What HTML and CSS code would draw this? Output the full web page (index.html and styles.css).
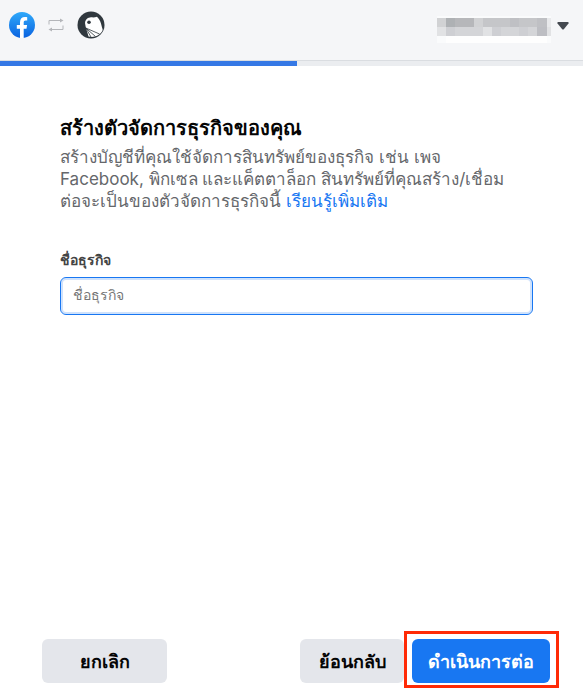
FILE: index.html
```html
<!DOCTYPE html>
<html lang="th">
  <head>
    <meta charset="UTF-8">
    <meta name="viewport" content="width=device-width, initial-scale=1">
    <title>สร้างตัวจัดการธุรกิจของคุณ</title>
    <link rel="stylesheet" href="styles.css">
  </head>
  <body>
    <header class="topbar">
      <div class="logos">
        <svg width="26" height="26" viewBox="0 0 26 26" aria-hidden="true">
          <defs>
            <linearGradient id="fb" x1="0" y1="0" x2="0" y2="1">
              <stop offset="0" stop-color="#2fa9fa"/>
              <stop offset="1" stop-color="#0b63e0"/>
            </linearGradient>
          </defs>
          <circle cx="13" cy="13" r="13" fill="url(#fb)"/>
          <path d="M11 26V16.800H7.800V13H11v-2.800C11 6.900 12.900 5.100 15.900 5.100c1.100 0 2.300.2 2.300.2v3.200h-1.500c-1.500 0-2 .9-2 1.900V13h3.400l-.6 3.800h-2.800V26z" fill="#fff"/>
        </svg>
        <svg width="16" height="14" viewBox="0 0 16 14" fill="none" stroke="#b4b6ba" aria-hidden="true">
          <path d="M1 6.500V2.500H14"/>
          <path d="M15 7.500V11.500H2"/>
          <path d="M12 0.500L15.500 2.500L12 4.500zM4 9.500L0.500 11.500L4 13.500z" fill="#b4b6ba" stroke="none"/>
        </svg>
        <svg width="28" height="28" viewBox="0 0 28 28" aria-hidden="true">
          <circle cx="14" cy="14" r="13.500" fill="#30383e"/>
          <path d="M8 12C8.500 8 11 6.500 14 6.300C16 6.500 18 6.500 20 5.800C23 9 24 12 24.500 14.500C25 17 26 18 25.500 19.500C23 24.500 17 27 11.500 25.500C10.500 21 8.500 17 8 12z" fill="#fff"/>
          <circle cx="12" cy="11.300" r="1.800" fill="#30383e"/>
          <path d="M8.800 17L18.500 25.500M8.800 17L14 26M8.800 17L22.500 23" stroke="#30383e" stroke-width="0.800"/>
        </svg>
      </div>
      <button class="account" type="button" aria-label="บัญชี">
        <!-- account name, pixelated -->
        <svg width="114" height="27" viewBox="0 0 114 27" shape-rendering="crispEdges" aria-hidden="true">
          <path fill="#fafbfc" d="M0 0h114v27H0z"/>
          <path fill="#c5c6c9" d="M0 2h110v9H0z"/>
          <path fill="#d1d2d4" d="M0 2h9v9H0zM37 2h9v9h-9z"/>
          <path fill="#aeb1b4" d="M9 2h9v9H9z"/>
          <path fill="#b6b7ba" d="M18 2h19v9H18z"/>
          <path fill="#bfc0c4" d="M73 2h9v9h-9zM100 2h10v9h-10z"/>
          <path fill="#d4d5d8" d="M0 11h110v9H0z"/>
          <path fill="#e1e2e4" d="M0 11h9v9H0zM46 11h9v9h-9zM110 11h4v9h-4z"/>
          <path fill="#cecfd3" d="M9 11h9v9H9zM55 11h9v9h-9zM82 11h9v9h-9z"/>
          <path fill="#bdbec3" d="M100 11h10v9h-10z"/>
          <path fill="#e8e9eb" d="M110 2h4v9h-4z"/>
          <path fill="#fefefe" d="M9 20h101v7H9z"/>
        </svg>
        <svg width="12" height="8" viewBox="0 0 12 8" aria-hidden="true">
          <path d="M1 0H11Q12 0 11.500 1.500L7 7Q6 8 5 7L0.500 1.500Q0 0 1 0z" fill="#444950"/>
        </svg>
      </button>
    </header>
    <div class="progress"><div class="progress-bar"></div></div>

    <main class="content">
      <h1>สร้างตัวจัดการธุรกิจของคุณ</h1>
      <p class="intro">สร้างบัญชีที่คุณใช้จัดการสินทรัพย์ของธุรกิจ เช่น เพจ<br>
        Facebook, พิกเซล และแค็ตตาล็อก สินทรัพย์ที่คุณสร้าง/เชื่อม<br>
        ต่อจะเป็นของตัวจัดการธุรกิจนี้ <a href="#">เรียนรู้เพิ่มเติม</a></p>
      <label class="field-label" for="business-name">ชื่อธุรกิจ</label>
      <input class="field" id="business-name" type="text" placeholder="ชื่อธุรกิจ">
    </main>

    <footer class="actions">
      <button class="btn btn-cancel" type="button">ยกเลิก</button>
      <button class="btn" type="button">ย้อนกลับ</button>
      <button class="btn btn-primary" type="button">ดำเนินการต่อ</button>
    </footer>
  </body>
</html>
```
FILE: styles.css
```css
* { box-sizing: border-box; }
body { margin: 0; min-height: 100vh; display: flex; flex-direction: column; background: #fff; color: #050505; font-family: Inter, "Noto Sans", sans-serif; }

.topbar { display: flex; justify-content: space-between; align-items: flex-start; height: 61px; padding: 11px 14px 0 9px; background: #f5f6f8; border-bottom: 1px solid #dadde1; }
.logos { display: flex; align-items: center; gap: 13px; }
.account { display: flex; align-items: center; gap: 6px; margin-top: 5px; padding: 0; border: 0; background: none; }
.account svg:last-child { margin-bottom: 8px; }
.progress { height: 5px; background: #ebedf0; }
.progress-bar { width: 51%; height: 5px; background: #3578e5; }

.content { flex: 1; padding: 48px 50px 0 60px; }
h1 { margin: 0 0 4px; font-size: 20px; line-height: 28px; font-weight: 700; }
.intro { margin: 0 0 38px; font-size: 17px; line-height: 22px; color: #65676b; }
.intro a { color: #1877f2; text-decoration: none; }
.field-label { display: block; margin-bottom: 7px; font-size: 14px; line-height: 20px; font-weight: 700; color: #444; }
.field { display: block; width: 100%; height: 38px; padding: 0 12px 4px; border: 1px solid #1877f2; border-radius: 6px; box-shadow: inset 0 0 0 2px #cfe2fc; font-family: inherit; font-size: 14px; outline: none; }
.field::placeholder { color: #777; }

.actions { display: flex; gap: 8px; padding: 8px 33px 8px 42px; }
.btn { position: relative; height: 44px; min-width: 104px; padding: 0 12px; border: 0; border-radius: 6px; background: #e4e6eb; color: #050505; font-family: inherit; font-size: 18px; font-weight: 700; white-space: nowrap; }
.btn-cancel { min-width: 125px; margin-right: auto; }
.btn-primary { min-width: 138px; background: #1877f2; color: #fff; }
.btn-primary::after { content: ""; position: absolute; inset: -8px -9px -5px -8px; border: 3px solid #ff2a06; }
```
